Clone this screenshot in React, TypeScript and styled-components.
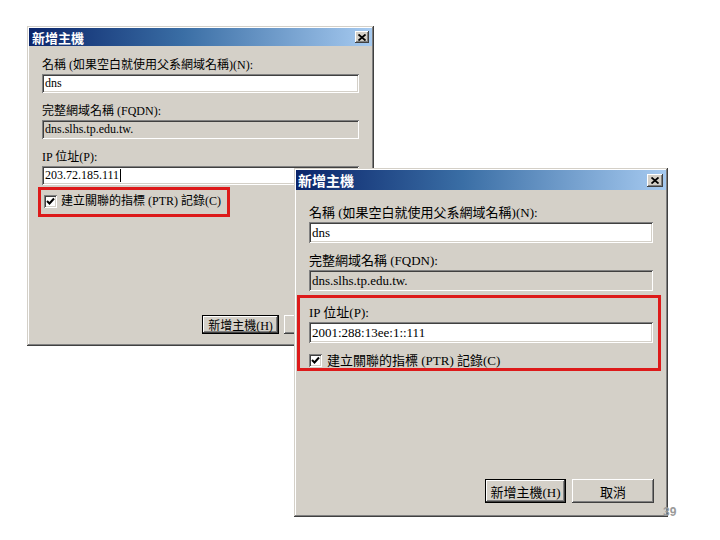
import React from "react";
import styled, { createGlobalStyle } from "styled-components";

type Size = "sm" | "lg";

const metrics = {
  sm: {
    font: 12,
    titleH: 18,
    titleFont: 13,
    titlePad: 3,
    field: 19,
    line: 16,
    gap: 10,
    padTop: 11,
    padX: 13,
    padB: 10,
    btnW: 77,
    btnH: 19,
    btnGap: 5,
    btnOut: -3,
    closeW: 14,
    closeH: 12,
  },
  lg: {
    font: 13,
    titleH: 20,
    titleFont: 14,
    titlePad: 2,
    field: 21,
    line: 17,
    gap: 9,
    padTop: 14,
    padX: 13,
    padB: 12,
    btnW: 81,
    btnH: 24,
    btnGap: 6,
    btnOut: -1,
    closeW: 16,
    closeH: 13,
  },
};

const m = (s: Size) => metrics[s];

const GlobalStyle = createGlobalStyle`
  html, body {
    margin: 0;
    padding: 0;
    background: #ffffff;
  }
  body {
    font-family: "Liberation Serif", "Noto Sans CJK TC", serif;
  }
`;

const Desktop = styled.div`
  position: relative;
  width: 720px;
  height: 540px;
  overflow: hidden;
  background: #ffffff;
`;

const Window = styled.div<{ $x: number; $y: number; $w: number; $h: number }>`
  position: absolute;
  left: ${(p) => p.$x}px;
  top: ${(p) => p.$y}px;
  width: ${(p) => p.$w}px;
  height: ${(p) => p.$h}px;
  box-sizing: border-box;
  padding: 2px;
  display: flex;
  flex-direction: column;
  background: #d4d0c8;
  box-shadow: inset -1px -1px #404040, inset 1px 1px #d4d0c8,
    inset -2px -2px #808080, inset 2px 2px #ffffff;
`;

const TitleBar = styled.div<{ $size: Size }>`
  height: ${(p) => m(p.$size).titleH}px;
  flex: none;
  display: flex;
  align-items: center;
  justify-content: space-between;
  padding: 0 3px 0 ${(p) => m(p.$size).titlePad}px;
  background: linear-gradient(90deg, #0a246a 0%, #3a6ea5 45%, #a6caf0 100%);
  color: #ffffff;
  font-family: "Noto Sans CJK TC", "Noto Sans", sans-serif;
  font-weight: 700;
  font-size: ${(p) => m(p.$size).titleFont}px;
  line-height: 1;
`;

const CloseButton = styled.div<{ $size: Size }>`
  width: ${(p) => m(p.$size).closeW}px;
  height: ${(p) => m(p.$size).closeH}px;
  box-sizing: border-box;
  display: flex;
  align-items: center;
  justify-content: center;
  background: #d4d0c8;
  box-shadow: inset -1px -1px #404040, inset 1px 1px #ffffff,
    inset -2px -2px #808080;
`;

const Body = styled.div<{ $size: Size }>`
  flex: 1;
  display: flex;
  flex-direction: column;
  padding: ${(p) => m(p.$size).padTop}px ${(p) => m(p.$size).padX}px
    ${(p) => m(p.$size).padB}px;
  font-size: ${(p) => m(p.$size).font}px;
  color: #000000;
`;

const Group = styled.div<{ $size: Size; $first?: boolean }>`
  display: flex;
  flex-direction: column;
  margin-top: ${(p) => (p.$first ? 0 : m(p.$size).gap)}px;
`;

const Label = styled.div<{ $size: Size }>`
  line-height: ${(p) => m(p.$size).line}px;
  margin-bottom: 1px;
  white-space: nowrap;
`;

const Field = styled.div<{ $size: Size; $readOnly?: boolean }>`
  height: ${(p) => m(p.$size).field}px;
  box-sizing: border-box;
  display: flex;
  align-items: center;
  padding: 0 3px;
  background: ${(p) => (p.$readOnly ? "#d4d0c8" : "#ffffff")};
  box-shadow: inset 1px 1px #808080, inset -1px -1px #ffffff,
    inset 2px 2px #404040, inset -2px -2px #d4d0c8;
  white-space: nowrap;
`;

const Caret = styled.span`
  display: inline-block;
  width: 1px;
  height: 13px;
  margin-left: 1px;
  background: #000000;
`;

const Highlight = styled.div<{ $size: Size }>`
  border: 3px solid #dd1a1a;
  display: flex;
  flex-direction: column;
  align-self: ${(p) => (p.$size === "sm" ? "flex-start" : "stretch")};
  margin: ${(p) => (p.$size === "sm" ? "2px 0 0 -4px" : "4px -8px 0 -12px")};
  padding: ${(p) => (p.$size === "sm" ? "3px 6px 5px 3px" : "6px 5px 0 9px")};
`;

const CheckRow = styled.div<{ $size: Size }>`
  display: flex;
  align-items: center;
  gap: ${(p) => (p.$size === "sm" ? 4 : 5)}px;
  line-height: ${(p) => (p.$size === "sm" ? 16 : 15)}px;
  margin-top: ${(p) => (p.$size === "sm" ? 0 : 10)}px;
  white-space: nowrap;
`;

const CheckBox = styled.div`
  width: 13px;
  height: 13px;
  flex: none;
  box-sizing: border-box;
  display: flex;
  align-items: center;
  justify-content: center;
  background: #ffffff;
  box-shadow: inset 1px 1px #808080, inset -1px -1px #ffffff,
    inset 2px 2px #404040, inset -2px -2px #d4d0c8;
`;

const ButtonRow = styled.div<{ $size: Size }>`
  margin-top: auto;
  margin-right: ${(p) => m(p.$size).btnOut}px;
  display: flex;
  justify-content: flex-end;
  gap: ${(p) => m(p.$size).btnGap}px;
`;

const Button = styled.div<{ $size: Size; $default?: boolean }>`
  width: ${(p) => m(p.$size).btnW + (p.$default ? 0 : 1)}px;
  height: ${(p) => m(p.$size).btnH}px;
  box-sizing: border-box;
  display: flex;
  align-items: center;
  justify-content: center;
  background: #d4d0c8;
  white-space: nowrap;
  box-shadow: ${(p) =>
    p.$default
      ? "inset 0 0 0 1px #000000, inset -2px -2px #404040, inset 2px 2px #ffffff, inset -3px -3px #808080"
      : "inset -1px -1px #404040, inset 1px 1px #ffffff, inset -2px -2px #808080"};
`;

const PageNumber = styled.div`
  position: absolute;
  left: 663px;
  top: 505px;
  font-family: "Liberation Sans", sans-serif;
  font-size: 12px;
  font-weight: 700;
  color: #9a9a9a;
`;

const CloseIcon = () => (
  <svg width="8" height="7" viewBox="0 0 8 7">
    <path d="M0.5 0.5 L7.5 6.5 M7.5 0.5 L0.5 6.5" stroke="#000" strokeWidth="1.8" />
  </svg>
);

const CheckIcon = () => (
  <svg width="9" height="9" viewBox="0 0 9 9">
    <path d="M1 4 L3.5 6.5 L8 1.5" fill="none" stroke="#000" strokeWidth="2" />
  </svg>
);

type DialogProps = {
  size: Size;
  x: number;
  y: number;
  w: number;
  h: number;
  ip: React.ReactNode;
  wide?: boolean;
  cancelCovered?: boolean;
};

const Dialog = ({ size, x, y, w, h, ip, wide, cancelCovered }: DialogProps) => {
  const ipGroup = (
    <>
      <Label $size={size}>IP 位址(P):</Label>
      <Field $size={size}>{ip}</Field>
    </>
  );
  const check = (
    <CheckRow $size={size}>
      <CheckBox>
        <CheckIcon />
      </CheckBox>
      <span>建立關聯的指標 (PTR) 記錄(C)</span>
    </CheckRow>
  );
  return (
    <Window $x={x} $y={y} $w={w} $h={h}>
      <TitleBar $size={size}>
        <span>新增主機</span>
        <CloseButton $size={size}>
          <CloseIcon />
        </CloseButton>
      </TitleBar>
      <Body $size={size}>
        <Group $size={size} $first>
          <Label $size={size}>名稱 (如果空白就使用父系網域名稱)(N):</Label>
          <Field $size={size}>dns</Field>
        </Group>
        <Group $size={size}>
          <Label $size={size}>完整網域名稱 (FQDN):</Label>
          <Field $size={size} $readOnly>
            dns.slhs.tp.edu.tw.
          </Field>
        </Group>
        {wide ? (
          <Highlight $size={size}>
            {ipGroup}
            {check}
          </Highlight>
        ) : (
          <>
            <Group $size={size}>{ipGroup}</Group>
            <Highlight $size={size}>{check}</Highlight>
          </>
        )}
        <ButtonRow $size={size}>
          <Button $size={size} $default>
            新增主機(H)
          </Button>
          {/* the cancel button of the back dialog sits under the front one */}
          <Button $size={size}>{cancelCovered ? null : "取消"}</Button>
        </ButtonRow>
      </Body>
    </Window>
  );
};

export default function App() {
  return (
    <>
      <GlobalStyle />
      <Desktop>
        <Dialog
          size="sm"
          x={27}
          y={26}
          w={347}
          h={320}
          cancelCovered
          ip={
            <>
              203.72.185.111
              <Caret />
            </>
          }
        />
        <Dialog
          size="lg"
          x={294}
          y={168}
          w={374}
          h={349}
          ip="2001:288:13ee:1::111"
          wide
        />
        <PageNumber>39</PageNumber>
      </Desktop>
    </>
  );
}
